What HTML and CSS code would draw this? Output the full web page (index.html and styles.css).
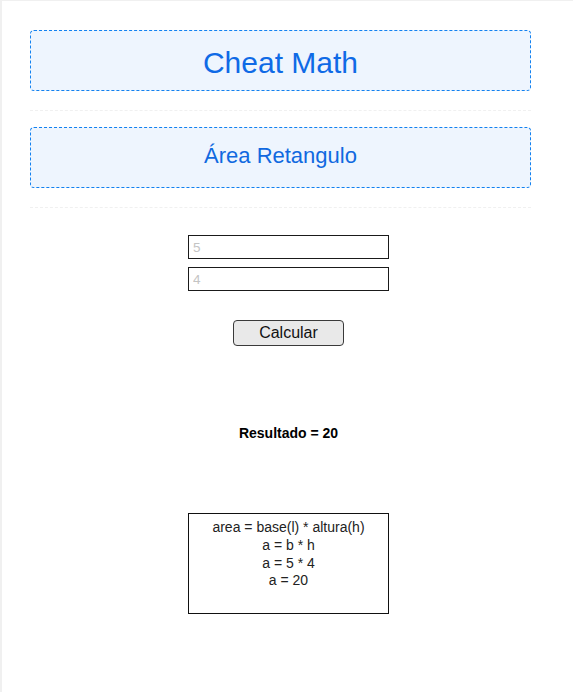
FILE: index.html
```html
<!DOCTYPE html>
<html lang="pt">
<head>
<meta charset="utf-8">
<title>Cheat Math</title>
<link rel="stylesheet" href="styles.css">
</head>
<body>
<div class="page">
  <header class="section">
    <div class="panel"><h1 class="title">Cheat Math</h1></div>
  </header>
  <section class="section">
    <div class="panel"><h2 class="subtitle">Área Retangulo</h2></div>
  </section>
  <main class="calc">
    <input class="field" type="text" placeholder="5">
    <input class="field field-second" type="text" placeholder="4">
    <button class="btn" type="button">Calcular</button>
    <p class="result">Resultado = 20</p>
    <div class="formula">
      <div>area = base(l) * altura(h)</div>
      <div>a = b * h</div>
      <div>a = 5 * 4</div>
      <div>a = 20</div>
    </div>
  </main>
</div>
</body>
</html>
```
FILE: styles.css
```css
html, body {
  margin: 0;
  padding: 0;
  background: #ffffff;
}
body {
  font-family: "Liberation Sans", Arial, sans-serif;
  color: #000;
}
.page {
  border-top: 1px solid #f0f0f0;
  border-left: 2px solid #f0f0f0;
  min-height: 692px;
  box-sizing: border-box;
}
.section {
  width: 501px;
  margin-left: 28px;
  padding-bottom: 19px;
  border-bottom: 1px dashed #f0f0f0;
  margin-bottom: 16px;
}
.page > .section:first-child {
  margin-top: 29px;
}
.panel {
  box-sizing: border-box;
  height: 61px;
  border: 1px dashed #1281f0;
  border-radius: 4px;
  background: #eef5fe;
  display: flex;
  align-items: center;
  justify-content: center;
}
.title {
  margin: 0;
  font-size: 30px;
  font-weight: normal;
  color: #0f6ae6;
  line-height: 1;
  padding-top: 5px;
}
.subtitle {
  margin: 0;
  font-size: 22px;
  font-weight: normal;
  color: #1069e0;
  line-height: 1;
  padding-bottom: 3px;
}
.calc {
  display: flex;
  flex-direction: column;
  align-items: center;
  padding-top: 11px;
  padding-left: 2px;
}
.field {
  box-sizing: border-box;
  width: 201px;
  height: 24px;
  border: 1px solid #1a1a1a;
  padding: 1px 4px;
  font-family: "Liberation Sans", Arial, sans-serif;
  font-size: 13.5px;
  margin: 0;
  outline: none;
}
.field::placeholder {
  color: #c4c4c4;
}
.field-second {
  margin-top: 8px;
}
.btn {
  box-sizing: border-box;
  margin-top: 29px;
  width: 111px;
  height: 26px;
  border: 1px solid #3a3a3a;
  border-radius: 4px;
  background: #e9e9e9;
  font-family: "Liberation Sans", Arial, sans-serif;
  font-size: 16px;
  color: #111;
  padding: 0;
}
.result {
  margin: 79px 0 0;
  font-size: 14px;
  font-weight: bold;
  line-height: 16px;
}
.formula {
  box-sizing: border-box;
  margin-top: 72px;
  width: 201px;
  height: 101px;
  border: 1px solid #111;
  padding-top: 5px;
  text-align: center;
  font-size: 14px;
  line-height: 17.8px;
  color: #222;
}
```
